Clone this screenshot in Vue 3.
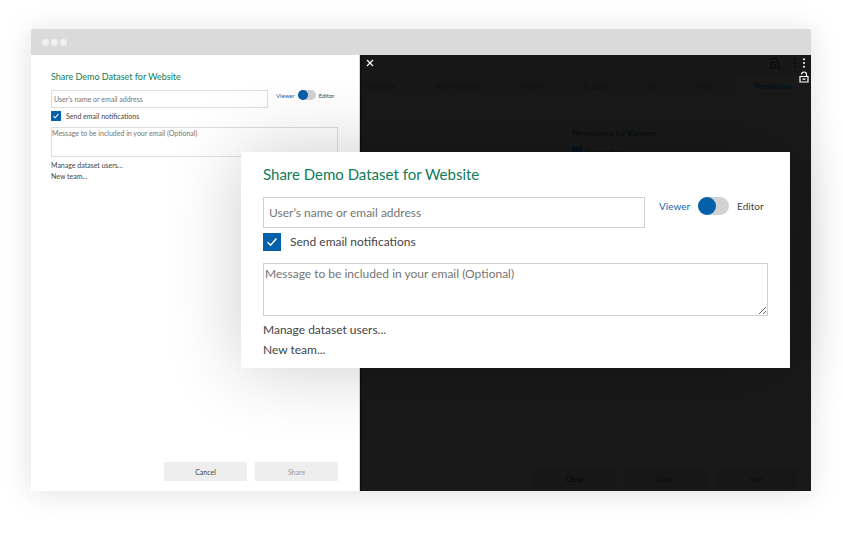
<script setup>
import { ref } from 'vue'

const recipient = ref('')
const message = ref('')
const notify = ref(true)
const editor = ref(false)
const exportData = ref(true)
const tabs = ['Exclusions', 'Archive/Delete', 'History', 'Append', 'Join', 'Users', 'Permissions']
</script>

<template>
  <main class="page">
    <section class="window">
      <header class="titlebar"><i></i><i></i><i></i></header>

      <div class="body">
        <section class="pane">
          <form class="share compact" @submit.prevent>
            <h2>Share Demo Dataset for Website</h2>
            <div class="who">
              <input v-model="recipient" class="field" type="text" aria-label="User’s name or email address" placeholder="User’s name or email address" />
              <div class="role">
                <label for="role-small" class="on">Viewer</label>
                <input id="role-small" v-model="editor" class="switch" type="checkbox" role="switch" />
                <label for="role-small">Editor</label>
              </div>
            </div>
            <div class="notify">
              <span class="tick">
                <input id="notify-small" v-model="notify" type="checkbox" />
                <svg viewBox="0 0 18 18" aria-hidden="true"><path d="M4.5 9.2 7.6 12.2 13.4 5.4" /></svg>
              </span>
              <label for="notify-small">Send email notifications</label>
            </div>
            <textarea v-model="message" class="field" aria-label="Message" placeholder="Message to be included in your email (Optional)"></textarea>
            <a href="#users">Manage dataset users...</a>
            <a href="#team">New team...</a>
          </form>
          <footer class="actions">
            <button type="button">Cancel</button>
            <button type="button" disabled>Share</button>
          </footer>
        </section>

        <section class="dimmed">
          <div class="toolbar">
            <svg class="lock" viewBox="0 0 10 12" aria-hidden="true"><path d="M1 5.5h8v5.5H1zM2.5 3.5a2.5 2.5 0 0 1 5 0v2M3.5 8.2h3" /></svg>
            <svg class="dots" viewBox="0 0 4 10" aria-hidden="true"><circle cx="2" cy="1.2" r="1" /><circle cx="2" cy="5" r="1" /><circle cx="2" cy="8.8" r="1" /></svg>
          </div>
          <nav class="tabs">
            <a v-for="tab in tabs" :key="tab" href="#" :class="{ active: tab === 'Permissions' }">{{ tab }}</a>
          </nav>
          <div class="permissions">
            <h3>Permissions for Viewers</h3>
            <div class="notify">
              <span class="tick">
                <input id="export" v-model="exportData" type="checkbox" />
                <svg viewBox="0 0 18 18" aria-hidden="true"><path d="M4.5 9.2 7.6 12.2 13.4 5.4" /></svg>
              </span>
              <label for="export">Export data</label>
            </div>
          </div>
          <footer class="actions">
            <button type="button">Close</button>
            <button type="button" disabled>Apply</button>
            <button type="button" disabled>Save</button>
          </footer>

          <button class="close" type="button" aria-label="Close">
            <svg viewBox="0 0 8 8" aria-hidden="true"><path d="M1 1l6 6M7 1 1 7" /></svg>
          </button>
          <div class="tools">
            <button type="button" aria-label="More">
              <svg class="dots" viewBox="0 0 4 10" aria-hidden="true"><circle cx="2" cy="1.2" r="1" /><circle cx="2" cy="5" r="1" /><circle cx="2" cy="8.8" r="1" /></svg>
            </button>
            <button type="button" aria-label="Unlock">
              <svg class="lock" viewBox="0 0 10 12" aria-hidden="true"><path d="M1 5.5h8v5.5H1zM2.5 3.5a2.5 2.5 0 0 1 5 0v2M3.5 8.2h3" /></svg>
            </button>
          </div>
        </section>
      </div>

      <form class="share large" @submit.prevent>
        <h2>Share Demo Dataset for Website</h2>
        <div class="who">
          <input v-model="recipient" class="field" type="text" aria-label="User’s name or email address" placeholder="User’s name or email address" />
          <div class="role">
            <label for="role-large" class="on">Viewer</label>
            <input id="role-large" v-model="editor" class="switch" type="checkbox" role="switch" />
            <label for="role-large">Editor</label>
          </div>
        </div>
        <div class="notify">
          <span class="tick">
            <input id="notify-large" v-model="notify" type="checkbox" />
            <svg viewBox="0 0 18 18" aria-hidden="true"><path d="M4.5 9.2 7.6 12.2 13.4 5.4" /></svg>
          </span>
          <label for="notify-large">Send email notifications</label>
        </div>
        <textarea v-model="message" class="field" aria-label="Message" placeholder="Message to be included in your email (Optional)"></textarea>
        <a href="#users">Manage dataset users...</a>
        <a href="#team">New team...</a>
      </form>
    </section>
  </main>
</template>

<style>
body {
  margin: 0;
  background: #fff;
}
</style>

<style scoped>
* {
  box-sizing: border-box;
}
.page {
  display: flex;
  min-height: 100vh;
  padding: 29px 32px 45px 31px;
  font-family: Lato, "Liberation Sans", sans-serif;
  color: #444;
  overflow: hidden;
}
.window {
  position: relative;
  display: flex;
  flex: 1;
  flex-direction: column;
  min-width: 0;
  border-radius: 2px 2px 0 0;
  box-shadow: 0 2px 30px rgba(0, 0, 0, 0.12);
}
.titlebar {
  display: flex;
  align-items: center;
  gap: 2px;
  height: 26px;
  padding-left: 11px;
  border-radius: 2px 2px 0 0;
  background: #dadada;
}
.titlebar i {
  width: 7px;
  height: 7px;
  border-radius: 50%;
  background: #f0f0f0;
}
.body {
  display: grid;
  flex: 1;
  grid-template-columns: 329fr 451fr;
  overflow: hidden;
}
.pane {
  display: flex;
  flex-direction: column;
  justify-content: space-between;
  padding: 16px 21px 10px 20px;
  border-right: 1px solid #d6d6d6;
  background: #fff;
}

/* Share form */
.share {
  display: flex;
  flex-direction: column;
}
h2 {
  margin: 0;
  font-weight: 400;
  color: #107c58;
}
input,
textarea,
button {
  margin: 0;
  padding: 0;
  font: inherit;
  color: inherit;
}
.field {
  border: 1px solid #d0d0d0;
  border-radius: 0;
  background: transparent;
  outline: none;
}
.field::placeholder {
  color: #757575;
  opacity: 1;
}
.who,
.role,
.notify {
  display: flex;
}
.who .field {
  flex: 1;
  min-width: 0;
}
.role,
.notify {
  align-items: center;
}
.on {
  color: #1168ad;
}
.switch {
  display: flex;
  appearance: none;
  border-radius: 9px;
  background: #d2d2d2;
}
.switch::before {
  content: "";
  height: 100%;
  aspect-ratio: 1;
  border-radius: 50%;
  background: #0460a9;
}
.switch:checked {
  justify-content: flex-end;
}
.tick {
  display: grid;
}
.tick input,
.tick svg {
  grid-area: 1 / 1;
  width: 100%;
  height: 100%;
}
.tick input {
  appearance: none;
  border: 1px solid #0460a9;
}
.tick input:checked {
  background: #0460a9;
}
.tick svg {
  pointer-events: none;
  fill: none;
  stroke: #fff;
  stroke-width: 1.5;
}
.tick input:not(:checked) + svg {
  visibility: hidden;
}
textarea {
  display: block;
  width: 100%;
}
a {
  color: inherit;
  text-decoration: none;
}
.share a {
  align-self: flex-start;
}

.compact {
  font-size: 7px;
  line-height: 11px;
}
.compact h2 {
  margin-bottom: 7px;
  font-size: 9px;
  line-height: 12px;
}
.compact .who {
  gap: 8px;
  margin-bottom: 3px;
}
.compact .who .field {
  height: 18px;
  padding: 0 2px;
}
.compact .role {
  gap: 3px;
  width: 62px;
  height: 10px;
  font-size: 6px;
}
.compact .switch {
  width: 18px;
  height: 10px;
}
.compact .field {
  border-color: #ddd;
}
.compact .notify {
  gap: 5px;
  height: 10px;
  margin-bottom: 6px;
}
.compact .tick,
.dimmed .tick {
  width: 10px;
  height: 10px;
}
.compact .tick svg {
  stroke-width: 2;
}
.compact textarea {
  height: 30px;
  margin-bottom: 3px;
  resize: none;
}

.large {
  position: absolute;
  top: 123px;
  right: 21px;
  left: 210px;
  padding: 12px 22px 8px;
  background: #fff;
  box-shadow: 0 0 70px rgba(0, 0, 0, 0.2);
  font-size: 12px;
  line-height: 20px;
}
.large h2 {
  margin-bottom: 13px;
  font-size: 15px;
}
.large .who {
  gap: 14px;
  margin-bottom: 5px;
}
.large .who .field {
  height: 31px;
  padding: 0 5px;
}
.large .role {
  gap: 8px;
  width: 109px;
  height: 18px;
  font-size: 10px;
}
.large .switch {
  width: 31px;
  height: 18px;
}
.large .notify {
  gap: 9px;
  height: 18px;
  margin-bottom: 12px;
}
.large .tick {
  width: 18px;
  height: 18px;
}
.large textarea {
  height: 53px;
  padding: 0 1px;
  margin-bottom: 4px;
}

/* Dialog buttons */
.actions {
  display: flex;
  justify-content: flex-end;
  gap: 8px;
}
.actions button {
  width: 83px;
  height: 19px;
  border: 0;
  border-radius: 1px;
  background: #eee;
  font-size: 7px;
}
.actions button:disabled {
  color: #999;
}

/* Dimmed dataset page */
.dimmed {
  position: relative;
  display: flex;
  flex-direction: column;
  min-width: 0;
  border-left: 2px solid #101010;
  background: #191919;
  font-size: 7px;
  color: #0a0a0a;
}
svg {
  display: block;
}
.lock {
  width: 10px;
  height: 12px;
  fill: none;
  stroke: currentColor;
  stroke-width: 1.2;
}
.dots {
  width: 4px;
  height: 10px;
  fill: currentColor;
}
.toolbar {
  display: flex;
  align-items: center;
  justify-content: flex-end;
  gap: 13px;
  height: 20px;
  padding: 0 14px 4px 0;
  background: #171717;
}
.tabs {
  display: flex;
  justify-content: space-between;
  background: #181818;
  line-height: 22px;
  color: #101010;
}
.tabs a {
  padding: 0 19px;
}
.tabs a:first-child {
  padding-left: 2px;
}
.tabs .active {
  background: #191919;
  font-weight: 700;
  color: #04101c;
}
.permissions {
  flex: 1;
  padding: 29px 0 0 210px;
}
.permissions h3 {
  margin: 0 0 7px;
  font-size: 8px;
  font-weight: 400;
  line-height: 14px;
  color: #040b08;
}
.permissions .notify {
  gap: 5px;
  line-height: 10px;
}
.dimmed .tick input {
  border-color: #06111c;
  background: #06111c;
}
.dimmed .tick svg {
  stroke: #1b1f24;
}
.dimmed .actions {
  padding: 0 13px 3px 0;
}
.dimmed .actions button {
  background: #171717;
  color: #050505;
}
.dimmed .actions button:disabled {
  color: #0e0e0e;
}
.close,
.tools button {
  display: grid;
  place-items: center;
  border: 0;
  background: none;
  color: #fff;
}
.close {
  position: absolute;
  top: 4px;
  left: 4px;
}
.close svg {
  width: 8px;
  height: 8px;
  fill: none;
  stroke: currentColor;
  stroke-width: 1.2;
}
.tools {
  position: absolute;
  top: 3px;
  right: 2px;
  display: grid;
  gap: 3px;
}
</style>
